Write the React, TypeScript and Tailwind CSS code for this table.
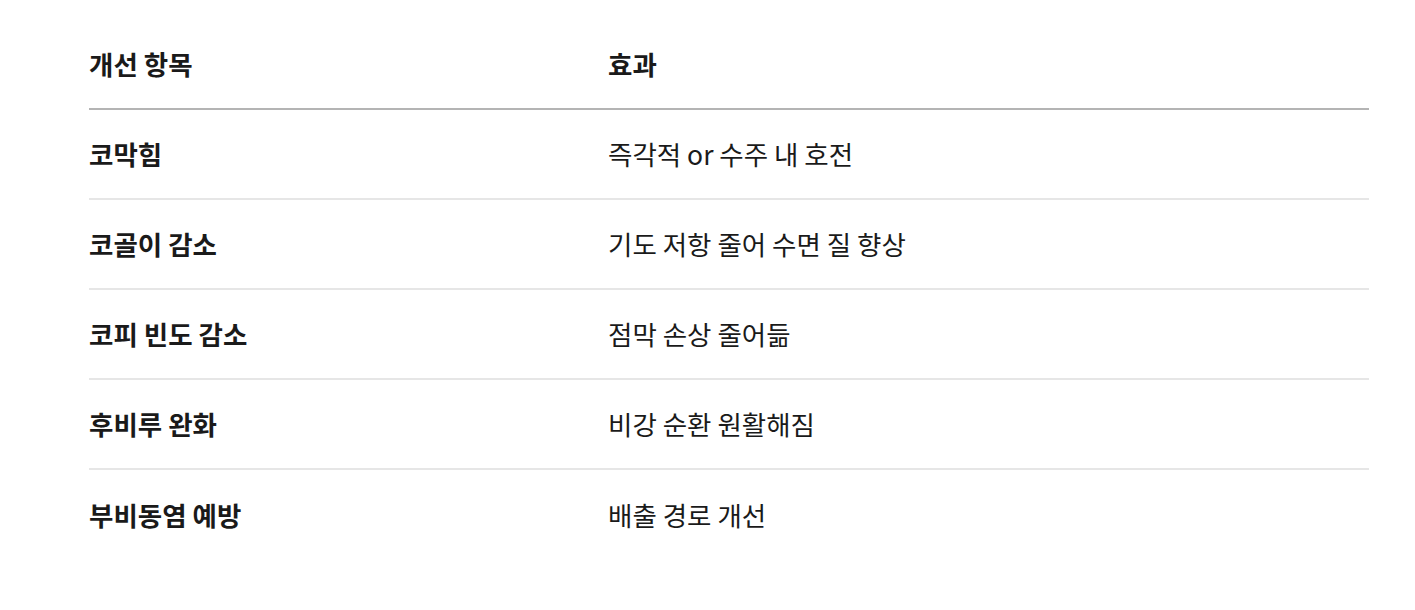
const rows = [
  { item: '코막힘', effect: '즉각적 or 수주 내 호전' },
  { item: '코골이 감소', effect: '기도 저항 줄어 수면 질 향상' },
  { item: '코피 빈도 감소', effect: '점막 손상 줄어듦' },
  { item: '후비루 완화', effect: '비강 순환 원활해짐' },
  { item: '부비동염 예방', effect: '배출 경로 개선' },
];

export default function App() {
  return (
    <div
      className="min-h-[610px] bg-white pt-[20px] text-[#1a1a1a]"
      style={{ fontFamily: '"Noto Sans CJK KR", "Noto Sans", sans-serif' }}
    >
      <div className="ml-[89px] w-[1280px]">
        {/* Header */}
        <div className="flex h-[90px] items-center border-b-2 border-[#b4b4b4] text-[26.5px] font-semibold">
          <div className="w-[519px]">개선 항목</div>
          <div className="flex-1">효과</div>
        </div>

        {/* Rows */}
        {rows.map((row, i) => (
          <div
            key={i}
            className={
              'flex h-[90px] items-center text-[26.5px] ' +
              (i < rows.length - 1 ? 'border-b-2 border-[#e6e6e6]' : '')
            }
          >
            <div className="w-[519px] font-semibold">{row.item}</div>
            <div className="flex-1 font-normal">{row.effect}</div>
          </div>
        ))}
      </div>
    </div>
  );
}
